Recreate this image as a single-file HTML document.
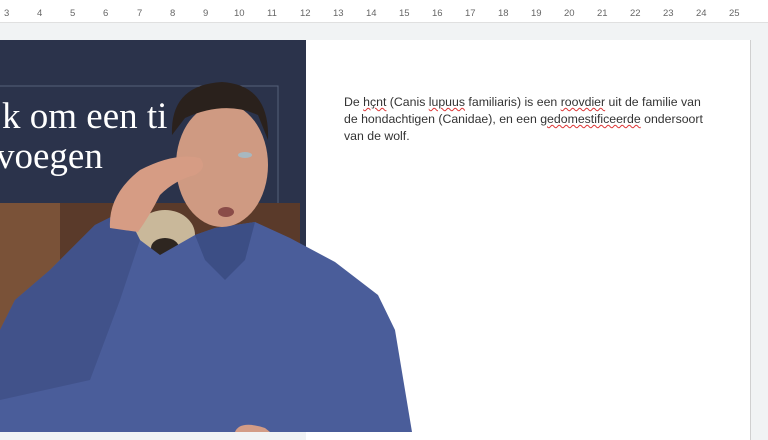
<!DOCTYPE html>
<html><head><meta charset="utf-8"><style>
body{margin:0;width:768px;height:432px;overflow:hidden;background:#f1f3f4;position:relative;font-family:"Liberation Sans",sans-serif}
.ruler{position:absolute;left:0;top:0;width:768px;height:22px;background:#fff;border-bottom:1px solid #e0e0e0}
.ruler span{position:absolute;top:8px;font-size:9.5px;color:#666}
.page{position:absolute;left:306px;top:40px;width:444px;height:400px;background:#fff;border-right:1px solid #d0d0d0}
.txt{position:absolute;left:344px;top:94px;font-size:12.3px;line-height:17px;color:#333;width:368px}
.w{text-decoration:underline wavy #d33;text-decoration-thickness:1px}
svg{position:absolute;left:0;top:0}
</style></head><body>
<div class="ruler">
<span style="left:4px">3</span><span style="left:37px">4</span><span style="left:70px">5</span><span style="left:103px">6</span><span style="left:137px">7</span><span style="left:170px">8</span><span style="left:203px">9</span><span style="left:234px">10</span><span style="left:267px">11</span><span style="left:300px">12</span><span style="left:333px">13</span><span style="left:366px">14</span><span style="left:399px">15</span><span style="left:432px">16</span><span style="left:465px">17</span><span style="left:498px">18</span><span style="left:531px">19</span><span style="left:564px">20</span><span style="left:597px">21</span><span style="left:630px">22</span><span style="left:663px">23</span><span style="left:696px">24</span><span style="left:729px">25</span>
</div>
<div class="page"></div>
<div class="txt">De <span class="w">hҫnt</span> (Canis <span class="w">lupuus</span> familiaris) is een <span class="w">roovdier</span> uit de familie van<br>de hondachtigen (Canidae), en een <span class="w">gedomestificeerde</span> ondersoort<br>van de wolf.</div>
<svg width="768" height="432">
<rect x="0" y="40" width="306" height="392" fill="#2b334b"/>
<rect x="-5" y="86" width="283" height="360" fill="none" stroke="#56607a" stroke-width="1"/>
<rect x="0" y="203" width="300" height="170" fill="#5a3a2a"/>
<rect x="0" y="203" width="60" height="170" fill="#7a5238"/>
<line x1="0" y1="420" x2="140" y2="385" stroke="#d8cfc0" stroke-width="3"/>
<text x="2" y="128" font-family="Liberation Serif,serif" font-size="37" fill="#fff">k om een ti</text>
<text x="-4" y="168" font-family="Liberation Serif,serif" font-size="37" fill="#fff">voegen</text>
<ellipse cx="165" cy="235" rx="30" ry="25" fill="#c9b89a"/>
<ellipse cx="165" cy="248" rx="14" ry="10" fill="#2e2620"/>
<path d="M0 330 L15 300 L50 270 L95 225 L125 210 L140 240 L160 255 L195 235 L215 228 L255 222 L290 238 L335 262 L378 295 L395 330 L412 432 L0 432 Z" fill="#4a5d9a"/>
<path d="M0 330 L15 300 L50 270 L95 225 L125 210 L140 240 L120 300 L90 380 L0 400 Z" fill="#41528a"/>
<path d="M195 235 L215 228 L255 222 L245 260 L225 280 L205 260 Z" fill="#3c4e85"/>
<ellipse cx="222" cy="165" rx="46" ry="62" fill="#cf9a82"/>
<path d="M172 135 Q170 85 222 82 Q270 85 268 140 L258 115 Q225 100 185 118 Z" fill="#2a211c"/>
<path d="M110 228 Q108 195 140 170 Q175 152 200 158 Q208 168 195 175 Q175 180 160 195 Q150 215 138 232 Z" fill="#d69c84"/>
<ellipse cx="245" cy="155" rx="7" ry="3" fill="#a8b8c0"/>
<ellipse cx="226" cy="212" rx="8" ry="5" fill="#8a4c48"/>
<path d="M235 432 Q240 420 265 428 L270 432 Z" fill="#d39c86"/>
</svg>
</body></html>
